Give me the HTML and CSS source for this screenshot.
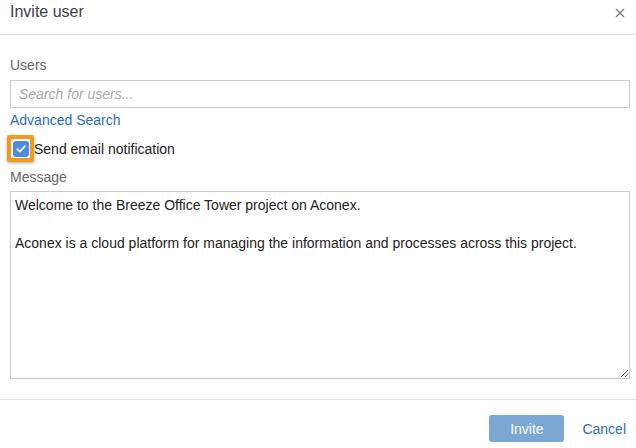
FILE: index.html
```html
<!DOCTYPE html>
<html lang="en">
<head>
    <meta charset="UTF-8">
    <meta name="viewport" content="width=device-width, initial-scale=1.0">
    <title>Invite user</title>
    <link rel="stylesheet" href="styles.css">
</head>
<body>

<div class="dialog">
    <div class="dialog-header">
        <h1>Invite user</h1>
        <span class="close">
            <svg width="10" height="10" viewBox="0 0 10 10"><path d="M1 1 L9 9 M9 1 L1 9" stroke="#7a7a7a" stroke-width="1.3"/></svg>
        </span>
    </div>

    <div class="dialog-body">
        <label class="field-label" for="users">Users</label>
        <input type="text" id="users" placeholder="Search for users...">
        <a class="link advanced" href="#">Advanced Search</a>

        <div class="check-row">
            <span class="check-focus">
                <span class="check-box">
                    <svg width="10" height="8" viewBox="0 0 10 8"><path d="M1.2 4.2 L3.8 6.6 L8.8 1.2" fill="none" stroke="#fff" stroke-width="1.6" stroke-linecap="round" stroke-linejoin="round"/></svg>
                </span>
            </span>
            <span class="check-text">Send email notification</span>
        </div>

        <label class="field-label" for="message">Message</label>
        <textarea id="message">Welcome to the Breeze Office Tower project on Aconex.

Aconex is a cloud platform for managing the information and processes across this project.</textarea>
    </div>

    <div class="dialog-footer">
        <button class="btn-invite">Invite</button>
        <a class="link cancel" href="#">Cancel</a>
    </div>
</div>

</body>
</html>
```

FILE: styles.css
```css
body {
    font-family: "Liberation Sans", Arial, sans-serif;
    font-size: 14px;
    margin: 0;
    background-color: #fff;
    color: #333;
}
.dialog {
    width: 636px;
}
.dialog-header {
    display: flex;
    justify-content: space-between;
    align-items: flex-start;
    height: 34px;
    padding: 0 10px;
    border-bottom: 1px solid #e3e3e3;
}
.dialog-header h1 {
    margin: 0;
    font-size: 16px;
    font-weight: normal;
    line-height: 23px;
    color: #3d4148;
}
.close {
    display: flex;
    margin: 8px 1px 0 0;
}
.dialog-body {
    display: flex;
    flex-direction: column;
    align-items: flex-start;
    padding: 22px 6px 20px 10px;
    border-bottom: 1px solid #e3e3e3;
}
.field-label {
    display: block;
    line-height: 16px;
    color: #666;
}
input[type="text"] {
    box-sizing: border-box;
    width: 620px;
    height: 28px;
    margin-top: 7px;
    padding: 0 8px;
    border: 1px solid #ccc;
    font-family: inherit;
    font-size: 14px;
    outline: none;
}
input::placeholder {
    color: #a8a8a8;
    font-style: italic;
}
.link {
    color: #2a6ebb;
    text-decoration: none;
}
.advanced {
    margin-top: 4px;
    line-height: 16px;
}
.check-row {
    display: flex;
    align-items: center;
    margin: 7px 0 7px -3px;
}
.check-focus {
    box-sizing: border-box;
    display: flex;
    align-items: center;
    justify-content: center;
    width: 27px;
    height: 27px;
    border: 4px solid #f29a1f;
    border-radius: 2px;
    box-shadow: 0 1px 3px rgba(0, 0, 0, 0.35);
    background-color: #fff;
}
.check-box {
    display: flex;
    align-items: center;
    justify-content: center;
    width: 16px;
    height: 16px;
    border-radius: 3px;
    background-color: #4d8ddb;
}
.check-text {
    color: #222;
    line-height: 16px;
}
textarea {
    box-sizing: border-box;
    width: 620px;
    height: 188px;
    margin-top: 6px;
    padding: 4px 4px;
    border: 1px solid #ccc;
    font-family: inherit;
    font-size: 14px;
    line-height: 19px;
    color: #222;
    outline: none;
}
.dialog-footer {
    display: flex;
    justify-content: flex-end;
    align-items: center;
    padding: 15px 10px 0 10px;
}
.btn-invite {
    width: 75px;
    height: 27px;
    border: none;
    border-radius: 3px;
    background-color: #7aa7d4;
    color: #fff;
    font-family: inherit;
    font-size: 14px;
}
.cancel {
    margin-left: 18px;
}
```
